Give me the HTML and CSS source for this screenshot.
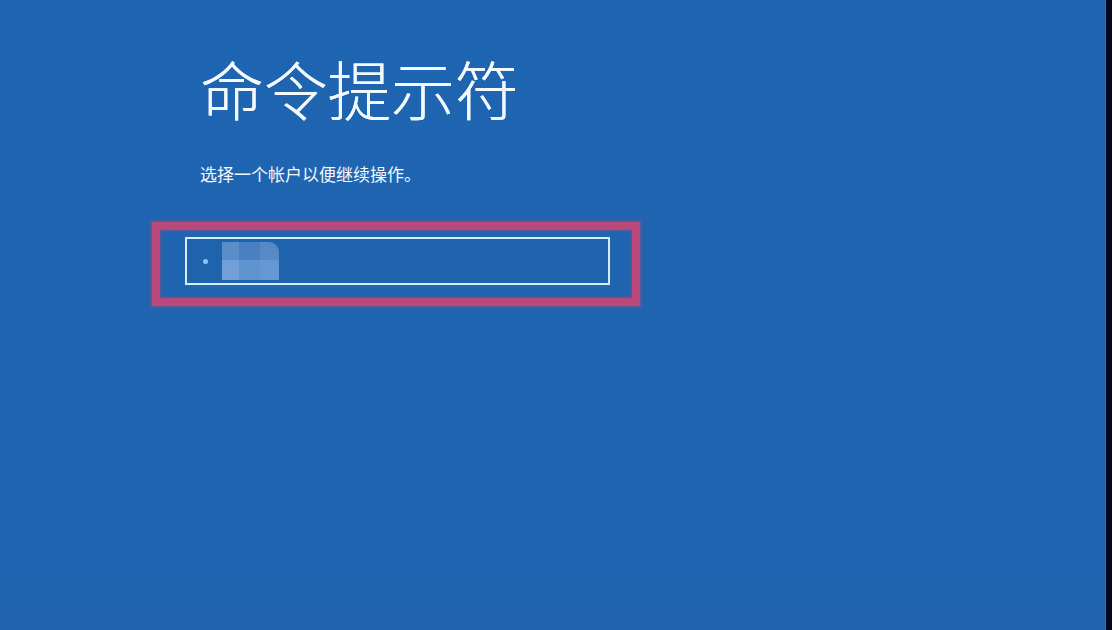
FILE: index.html
```html
<!DOCTYPE html>
<html lang="zh-CN">
<head>
<meta charset="utf-8">
<title>命令提示符</title>
<link rel="stylesheet" href="styles.css">
</head>
<body>
<div class="screen">
  <main class="content">
    <h1 class="title">命令提示符</h1>
    <p class="subtitle">选择一个帐户以便继续操作。</p>
    <div class="highlight">
      <div class="account">
        <span class="dot"></span>
        <div class="avatar">
          <span class="t t1"></span><span class="t t2"></span><span class="t t3"></span>
          <span class="t t4"></span><span class="t t5"></span><span class="t t6"></span>
        </div>
      </div>
    </div>
  </main>
  <div class="edge"></div>
</div>
</body>
</html>
```
FILE: styles.css
```css
html, body {
  margin: 0;
  padding: 0;
  height: 100%;
}
body {
  background: #1f65b0;
  font-family: "Noto Sans CJK SC", "Noto Sans", sans-serif;
  color: #eef6fc;
  overflow: hidden;
}
.screen {
  display: flex;
  height: 630px;
  background: linear-gradient(180deg, #1e65b1 0%, #2064b0 100%);
}
.content {
  flex: 1;
  padding-left: 200px;
  padding-top: 49px;
}
.edge {
  width: 6px;
  background: #05051f;
  box-shadow: -1px 0 0 #3a6aa8;
}
.title {
  margin: 0;
  font-size: 64px;
  line-height: 76px;
  font-weight: 300;
  letter-spacing: -0.3px;
  color: #f3f9fd;
  text-shadow: 0 0 0.6px #f3f9fd;
}
.subtitle {
  margin: 39px 0 0 0;
  font-size: 17px;
  line-height: 20px;
  font-weight: 400;
  color: #f3f8fc;
  letter-spacing: 0;
}
.highlight {
  margin: 38px 0 0 -48px;
  width: 425px;
  border: 8px solid #b8497a;
  box-shadow: 0 0 3px 1px rgba(184, 73, 122, 0.6), inset 0 0 3px 1px rgba(184, 73, 122, 0.5);
  padding: 7px 22px 13px 25px;
  box-sizing: content-box;
}
.account {
  height: 44px;
  border: 2px solid #d6eef9;
  display: flex;
  align-items: center;
  padding-left: 16px;
  background: #1f63ad;
}
.dot {
  width: 5px;
  height: 5px;
  border-radius: 50%;
  background: #8fc3ee;
  margin-right: 14px;
}
.avatar {
  width: 57px;
  height: 38px;
  display: grid;
  grid-template-columns: 17px 21px 19px;
  grid-template-rows: 18px 20px;
  border-top-right-radius: 10px;
  overflow: hidden;
  filter: blur(0.6px);
}
.t1 { background: #5a8ecb; }
.t2 { background: #4a80c2; }
.t3 { background: #5889c6; }
.t4 { background: #70a0d7; }
.t5 { background: #5f94cf; }
.t6 { background: #6498d2; }
```
